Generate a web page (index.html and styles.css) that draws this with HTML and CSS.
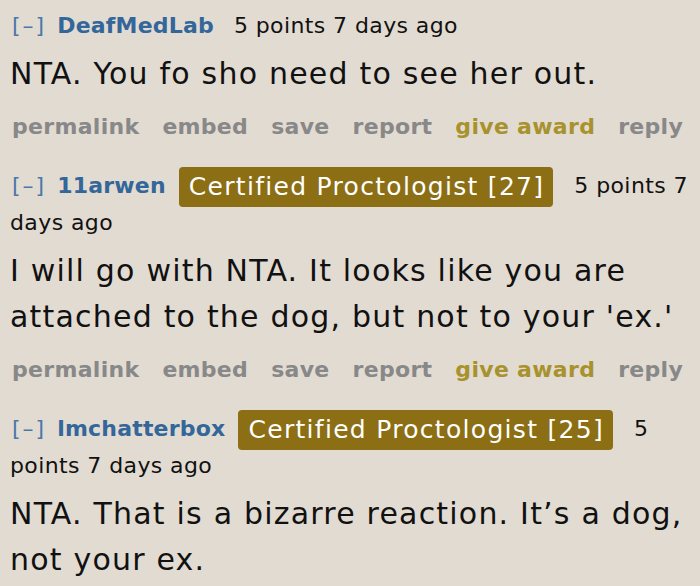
FILE: index.html
```html
<!DOCTYPE html>
<html>
<head>
<meta charset="utf-8">
<link rel="stylesheet" href="styles.css">
</head>
<body>
<div class="thread">
  <div class="comment">
    <p class="tagline"><span class="expand">[–]</span> <a class="author">DeafMedLab</a><span class="score">5 points 7 days ago</span></p>
    <div class="md"><p>NTA. You fo sho need to see her out.</p></div>
    <ul class="buttons">
      <li>permalink</li><li>embed</li><li>save</li><li>report</li><li class="gold">give award</li><li>reply</li>
    </ul>
  </div>
  <div class="comment">
    <p class="tagline"><span class="expand">[–]</span> <a class="author">11arwen</a><span class="flair">Certified Proctologist [27]</span><span class="score">5 points 7 days ago</span></p>
    <div class="md"><p>I will go with NTA. It looks like you are attached to the dog, but not to your 'ex.'</p></div>
    <ul class="buttons">
      <li>permalink</li><li>embed</li><li>save</li><li>report</li><li class="gold">give award</li><li>reply</li>
    </ul>
  </div>
  <div class="comment">
    <p class="tagline"><span class="expand">[–]</span> <a class="author">lmchatterbox</a><span class="flair">Certified Proctologist [25]</span><span class="score">5 points 7 days ago</span></p>
    <div class="md"><p>NTA. That is a bizarre reaction. It’s a dog, not your ex.</p></div>
  </div>
</div>
</body>
</html>
```

FILE: styles.css
```css
html, body {
  margin: 0;
  padding: 0;
  background: #e2dbd2;
}
body {
  font-family: "DejaVu Sans", Verdana, sans-serif;
  color: #111;
}
.thread {
  padding: 8px 6px 0 10px;
}
.comment {
  margin-bottom: 23px;
}
.tagline {
  margin: 0;
  font-size: 22px;
  line-height: 36px;
  color: #111;
}
.expand {
  color: #4a78a8;
  margin-left: 2px;
  margin-right: 4px;
  letter-spacing: 2px;
}
.author {
  color: #336699;
  font-weight: bold;
  letter-spacing: 0.2px;
}
.score {
  margin-left: 20px;
  letter-spacing: 0.4px;
}
.flair {
  display: inline-block;
  background: #8c6e14;
  color: #fff;
  font-size: 25px;
  letter-spacing: 1.3px;
  line-height: 32px;
  padding: 4px 9px 4px 10px;
  margin: -2px 21px -2px 13px;
  border-radius: 4px;
  vertical-align: middle;
}
.flair + .score {
  margin-left: 0;
}
.md p {
  margin: 7px 0 0 0;
  font-size: 30px;
  letter-spacing: 1.2px;
  line-height: 46px;
}
.buttons {
  list-style: none;
  margin: 12px 0 0 0;
  padding: 0 0 0 2px;
  display: flex;
  gap: 23px;
  font-size: 22px;
  letter-spacing: 0.3px;
  font-weight: bold;
  line-height: 36px;
  color: #888888;
}
.buttons .gold {
  color: #a8922d;
}
```
